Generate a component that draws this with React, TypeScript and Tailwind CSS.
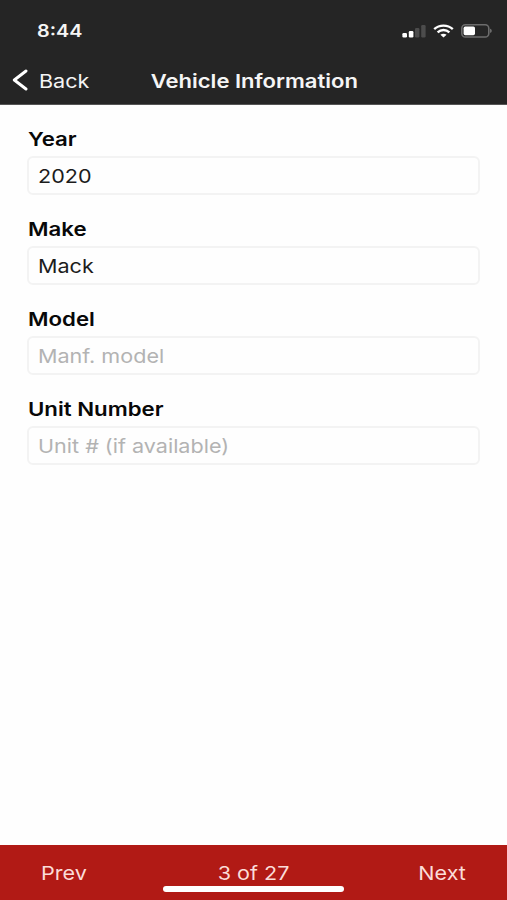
import React, { useState } from "react";

interface FieldProps {
  id: string;
  label: string;
  value: string;
  placeholder?: string;
  onChange: (id: string, value: string) => void;
}

const Field = ({ id, label, value, placeholder, onChange }: FieldProps) => {
  return (
    <div className="flex flex-col">
      <label
        htmlFor={id}
        className="ml-px w-fit origin-left scale-x-[1.17] text-[19px] leading-6 font-semibold text-[#080808]"
      >
        {label}
      </label>
      <div className="mt-1 h-[39px] rounded-[6px] border-2 border-[#f3f3f3] pt-0.5 pl-[8.5px] flex items-center overflow-hidden">
        <input
          id={id}
          type="text"
          value={value}
          placeholder={placeholder}
          onChange={(e) => onChange(id, e.target.value)}
          className="w-[85%] origin-left scale-x-[1.135] bg-transparent text-[19px] leading-6 text-[#1c1c1c] outline-none placeholder:text-[#b3b3b3]"
        />
      </div>
    </div>
  );
};

const StatusIcons = () => (
  <div className="flex items-center">
    {/* cellular */}
    <svg width="24" height="14" viewBox="0 0 24 14">
      <rect x="0.4" y="9" width="4.6" height="4.5" rx="1.2" fill="#fff" />
      <rect x="6.8" y="7" width="4.6" height="6.5" rx="1.2" fill="#fff" />
      <rect x="13" y="4" width="4.4" height="9.5" rx="1.2" fill="#4c4c4c" />
      <rect x="19.2" y="1" width="4.4" height="12.5" rx="1.2" fill="#4c4c4c" />
    </svg>
    {/* wifi */}
    <svg
      className="ml-[7px]"
      width="21"
      height="14"
      viewBox="0 0 21 14"
      fill="none"
      stroke="#fff"
      strokeWidth="2.4"
    >
      <path d="M1.2 5.1C6.4 0.4 14.6 0.4 19.8 5.1" />
      <path d="M4.6 8.3C8 5.3 13 5.3 16.4 8.3" />
      <path d="M10.5 13.4L7.4 10.8C9.2 9.3 11.8 9.3 13.6 10.8Z" fill="#fff" stroke="none" />
    </svg>
    {/* battery */}
    <svg className="ml-[7px]" width="32" height="14" viewBox="0 0 32 14">
      <rect x="0.8" y="0.8" width="27" height="12.2" rx="3.6" fill="none" stroke="#6c6c6c" strokeWidth="1.6" />
      <rect x="2.6" y="2.6" width="11.4" height="8.6" rx="1.6" fill="#fff" />
      <path d="M29 4.8C31.4 5.4 31.4 8.4 29 9Z" fill="#6c6c6c" />
    </svg>
  </div>
);

const App = () => {
  const [vehicle, setVehicle] = useState<Record<string, string>>({
    year: "2020",
    make: "Mack",
    model: "",
    unit: "",
  });

  const handleChange = (id: string, value: string) => {
    setVehicle((prev) => ({ ...prev, [id]: value }));
  };

  return (
    <div className="flex h-[900px] w-[507px] flex-col overflow-hidden bg-[#fefefe] font-['Inter',sans-serif]">
      <header className="flex h-[105px] flex-col border-b border-[#555] bg-[#252525] text-[#f5f5f5]">
        <div className="flex h-[62px] items-center justify-between pr-[14px] pl-[37px]">
          <span className="origin-left scale-x-[1.165] pt-0.5 text-[17px] font-semibold">8:44</span>
          <StatusIcons />
        </div>
        <div className="grid h-9 grid-cols-[1fr_auto_1fr] items-center">
          <button className="flex items-center pl-3">
            <svg
              width="16"
              height="22"
              viewBox="0 0 16 22"
              fill="none"
              stroke="#fff"
              strokeWidth="2.9"
              strokeLinecap="round"
              strokeLinejoin="round"
            >
              <path d="M14 2L2.3 11L14 20" />
            </svg>
            <span className="ml-[11px] origin-left scale-x-[1.135] pt-[3px] text-[19px] leading-6">Back</span>
          </button>
          <h1 className="ml-px scale-x-[1.16] pt-[3px] text-[19px] leading-6 font-semibold">
            Vehicle Information
          </h1>
        </div>
      </header>

      <main className="flex flex-1 flex-col gap-[23px] px-[27px] pt-[23px]">
        <Field id="year" label="Year" value={vehicle.year} onChange={handleChange} />
        <Field id="make" label="Make" value={vehicle.make} onChange={handleChange} />
        <Field
          id="model"
          label="Model"
          value={vehicle.model}
          placeholder="Manf. model"
          onChange={handleChange}
        />
        <Field
          id="unit"
          label="Unit Number"
          value={vehicle.unit}
          placeholder="Unit # (if available)"
          onChange={handleChange}
        />
      </main>

      <footer className="flex h-[55px] flex-col items-center bg-[#b11a15] pt-[17px] text-[19px] leading-6 text-[#fbdcd8]">
        <div className="grid w-full grid-cols-[1fr_auto_1fr] items-center">
          <button className="ml-[41px] origin-left scale-x-[1.135] justify-self-start">Prev</button>
          <span className="scale-x-[1.135]">3 of 27</span>
          <button className="mr-[41px] origin-right scale-x-[1.135] justify-self-end">Next</button>
        </div>
        <div className="h-[6px] w-[181px] rounded-full bg-white" />
      </footer>
    </div>
  );
};

export default App;
